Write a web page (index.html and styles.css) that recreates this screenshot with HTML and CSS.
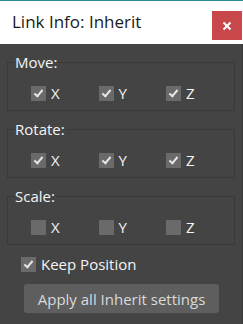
FILE: index.html
```html
<!DOCTYPE html>
<html lang="en">
<head>
    <meta charset="UTF-8">
    <meta name="viewport" content="width=device-width, initial-scale=1.0">
    <title>Link Info: Inherit</title>
    <link rel="stylesheet" href="styles.css">
</head>
<body>
    <div class="window">
        <div class="titlebar">
            <span class="title">Link Info: Inherit</span>
            <span class="close-btn">
                <svg width="10" height="10" viewBox="0 0 10 10"><path d="M1.5 1.5 L8.5 8.5 M8.5 1.5 L1.5 8.5" stroke="#fff" stroke-width="2"/></svg>
            </span>
        </div>

        <div class="panel">
            <fieldset class="group">
                <legend>Move:</legend>
                <div class="axis-row">
                    <label class="check on"><span class="box"></span>X</label>
                    <label class="check on"><span class="box"></span>Y</label>
                    <label class="check on"><span class="box"></span>Z</label>
                </div>
            </fieldset>

            <fieldset class="group">
                <legend>Rotate:</legend>
                <div class="axis-row">
                    <label class="check on"><span class="box"></span>X</label>
                    <label class="check on"><span class="box"></span>Y</label>
                    <label class="check on"><span class="box"></span>Z</label>
                </div>
            </fieldset>

            <fieldset class="group">
                <legend>Scale:</legend>
                <div class="axis-row">
                    <label class="check"><span class="box"></span>X</label>
                    <label class="check"><span class="box"></span>Y</label>
                    <label class="check"><span class="box"></span>Z</label>
                </div>
            </fieldset>

            <label class="check on keep"><span class="box"></span>Keep Position</label>

            <div class="apply-btn">Apply all Inherit settings</div>
        </div>
    </div>
</body>
</html>
```

FILE: styles.css
```css
html, body {
    margin: 0;
    padding: 0;
    height: 100%;
    overflow: hidden;
}

body {
    font-family: "Open Sans", "Noto Sans", sans-serif;
    background: #444444;
}

.window {
    width: 243px;
    height: 324px;
    display: flex;
    flex-direction: column;
}

.titlebar {
    height: 43px;
    border-top: 1px solid #2c8c8f;
    background: #ffffff;
    display: flex;
    align-items: center;
    justify-content: space-between;
    padding-left: 12px;
}

.title {
    font-size: 17px;
    color: #1a1a1a;
    margin-top: -2px;
}

.close-btn {
    width: 30px;
    height: 29px;
    margin-right: 1px;
    margin-top: 10px;
    align-self: flex-start;
    background: #c7474b;
    display: flex;
    align-items: center;
    justify-content: center;
}

.panel {
    flex: 1;
    background: #444444;
    padding: 7px 7px 0 7px;
    border-right: 1px solid #383838;
    color: #f4f4f4;
    font-size: 15px;
}

.group {
    margin: 0 0 7px 0;
    padding: 10px 0 7px 7px;
    border: 1px solid #393939;
    min-width: 0;
}

.group legend {
    padding: 0 1px 0 0;
    line-height: 22px;
}

.group + .group {
    margin-top: 1px;
}

.axis-row {
    display: grid;
    grid-template-columns: repeat(3, 67.5px);
    padding-left: 16px;
}

.check {
    display: flex;
    align-items: center;
    gap: 5px;
    line-height: 20px;
}

.box {
    width: 15px;
    height: 15px;
    background: #6a6a6a;
    display: inline-block;
    position: relative;
}

.check.on .box::after {
    content: "";
    position: absolute;
    left: 5px;
    top: 2px;
    width: 3px;
    height: 7px;
    border-right: 2px solid #e6e6e6;
    border-bottom: 2px solid #e6e6e6;
    transform: rotate(40deg);
}

.keep {
    margin: 9px 0 0 14px;
}

.apply-btn {
    margin: 10px 0 0 17px;
    width: 195px;
    height: 29px;
    background: #5e5e5e;
    border-radius: 3px;
    color: #dadada;
    display: flex;
    align-items: center;
    justify-content: center;
}
```
